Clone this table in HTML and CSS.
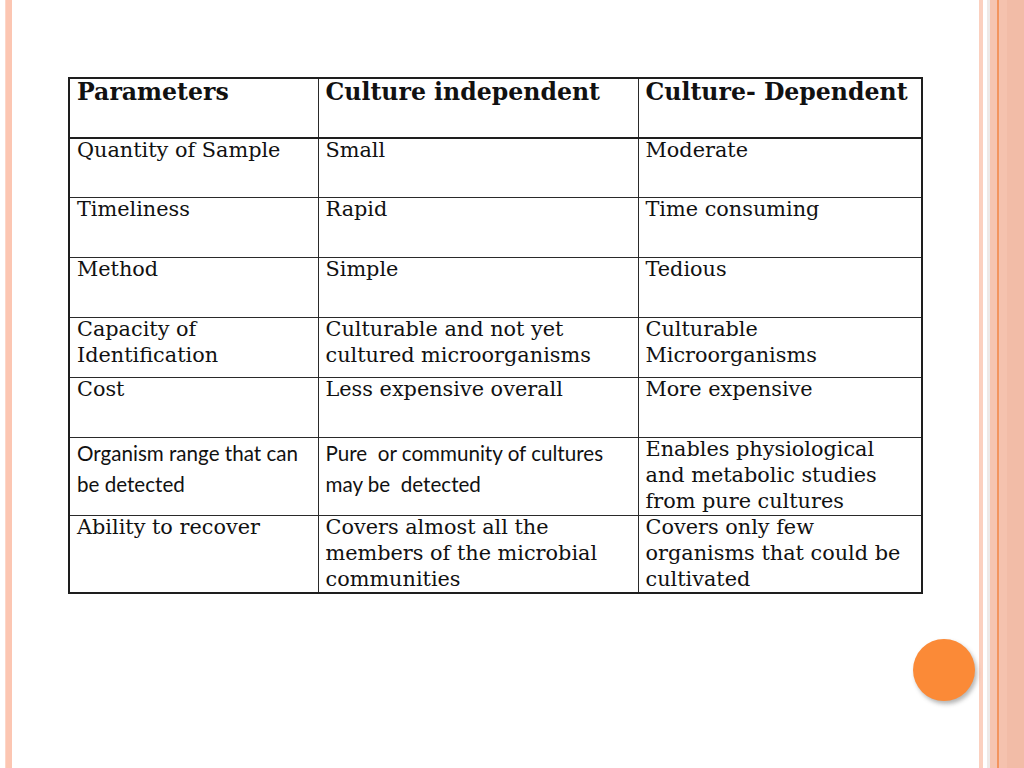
FILE: index.html
```html
<!DOCTYPE html>
<html>
<head>
<meta charset="utf-8">
<link rel="stylesheet" href="styles.css">
</head>
<body>
<div class="page">
  <div class="left-gap"></div>
  <div class="left-stripe"></div>
  <main class="content">
    <table class="grid">
      <colgroup>
        <col class="c1"><col class="c2"><col class="c3">
      </colgroup>
      <tr class="head">
        <th><div class="txt">Parameters</div></th>
        <th><div class="txt">Culture independent</div></th>
        <th><div class="txt">Culture- Dependent</div></th>
      </tr>
      <tr class="r60 first">
        <td><div class="txt">Quantity of Sample</div></td>
        <td><div class="txt">Small</div></td>
        <td><div class="txt">Moderate</div></td>
      </tr>
      <tr class="r60">
        <td><div class="txt">Timeliness</div></td>
        <td><div class="txt">Rapid</div></td>
        <td><div class="txt">Time consuming</div></td>
      </tr>
      <tr class="r60">
        <td><div class="txt">Method</div></td>
        <td><div class="txt">Simple</div></td>
        <td><div class="txt">Tedious</div></td>
      </tr>
      <tr class="r60">
        <td><div class="txt">Capacity of<br>Identification</div></td>
        <td><div class="txt">Culturable and not yet<br>cultured microorganisms</div></td>
        <td><div class="txt">Culturable<br>Microorganisms</div></td>
      </tr>
      <tr class="r60">
        <td><div class="txt">Cost</div></td>
        <td><div class="txt">Less expensive overall</div></td>
        <td><div class="txt">More expensive</div></td>
      </tr>
      <tr class="r78">
        <td class="sans"><div class="txt">Organism range that can<br>be detected</div></td>
        <td class="sans"><div class="txt">Pure&nbsp; or community of cultures<br>may be&nbsp; detected</div></td>
        <td><div class="txt">Enables physiological<br>and metabolic studies<br>from pure cultures</div></td>
      </tr>
      <tr class="r78 last">
        <td><div class="txt">Ability to recover</div></td>
        <td><div class="txt">Covers almost all the<br>members of the microbial<br>communities</div></td>
        <td><div class="txt">Covers only few<br>organisms that could be<br>cultivated</div></td>
      </tr>
    </table>
  </main>
  <aside class="right-deco">
    <div class="rd rd-gap"></div>
    <div class="rd rd-light"></div>
    <div class="rd rd-white"></div>
    <div class="rd rd-gray"></div>
    <div class="rd rd-pink"></div>
    <div class="rd rd-line"></div>
    <div class="rd rd-pink2"></div>
    <div class="rd rd-dark"></div>
  </aside>
  <div class="dot"></div>
</div>
</body>
</html>
```

FILE: styles.css
```css
html, body {
  margin: 0;
  padding: 0;
  background: #ffffff;
}
.page {
  position: relative;
  width: 1024px;
  height: 768px;
  display: flex;
  overflow: hidden;
  background: #ffffff;
}
.left-gap { width: 5px; flex: none; }
.left-stripe {
  width: 7px;
  flex: none;
  background: #fcc6b2;
  border-left: 1px solid #fdd6c8;
  box-sizing: border-box;
}
.content {
  flex: 1;
  padding: 77px 0 0 56px;
}
.grid {
  border-collapse: collapse;
  table-layout: fixed;
  width: 853px;
  border: 2px solid #1e1e1e;
  font-family: "DejaVu Serif", "Liberation Serif", serif;
  color: #111;
}
.c1 { width: 249px; }
.c2 { width: 320px; }
.c3 { width: 284px; }
.grid th, .grid td {
  border: 1px solid #2a2a2a;
  vertical-align: top;
  text-align: left;
  padding: 0 4px 0 7px;
  font-size: 20.8px;
  line-height: 26px;
  font-weight: normal;
  overflow: hidden;
}
.grid td .txt { margin-top: -2px; }
.grid th {
  font-weight: bold;
  font-size: 23.6px;
  line-height: 28px;
  border-bottom: 2px solid #1e1e1e;
  height: 58px;
}
.grid th .txt { margin-top: -1px; white-space: nowrap; }
.r60 td { height: 59px; }
.r60.first td { height: 58px; }
.r78 td { height: 77px; }
.r78.last td { height: 76px; }
.grid td.sans {
  font-family: "Lato", "Noto Sans", sans-serif;
  font-size: 20.6px;
  line-height: 31px;
}
.grid td.sans .txt { margin-top: 0; }
.right-deco {
  width: 48px;
  flex: none;
  display: flex;
}
.rd { height: 100%; flex: none; }
.rd-gap { width: 3px; background: #ffffff; }
.rd-light { width: 4px; background: #fbd0bf; }
.rd-white { width: 4px; background: #ffffff; }
.rd-gray { width: 3px; background: #eeeae8; }
.rd-pink { width: 7px; background: #f6c5b1; }
.rd-line { width: 2px; background: #f3955f; }
.rd-pink2 { width: 8px; background: #f5c2ae; }
.rd-dark { width: 17px; background: #f2bca7; }
.dot {
  position: absolute;
  left: 913px;
  top: 639px;
  width: 62px;
  height: 62px;
  border-radius: 50%;
  background: #fb8a37;
  box-shadow: 2px 3px 4px rgba(90, 90, 90, 0.45);
}
```
